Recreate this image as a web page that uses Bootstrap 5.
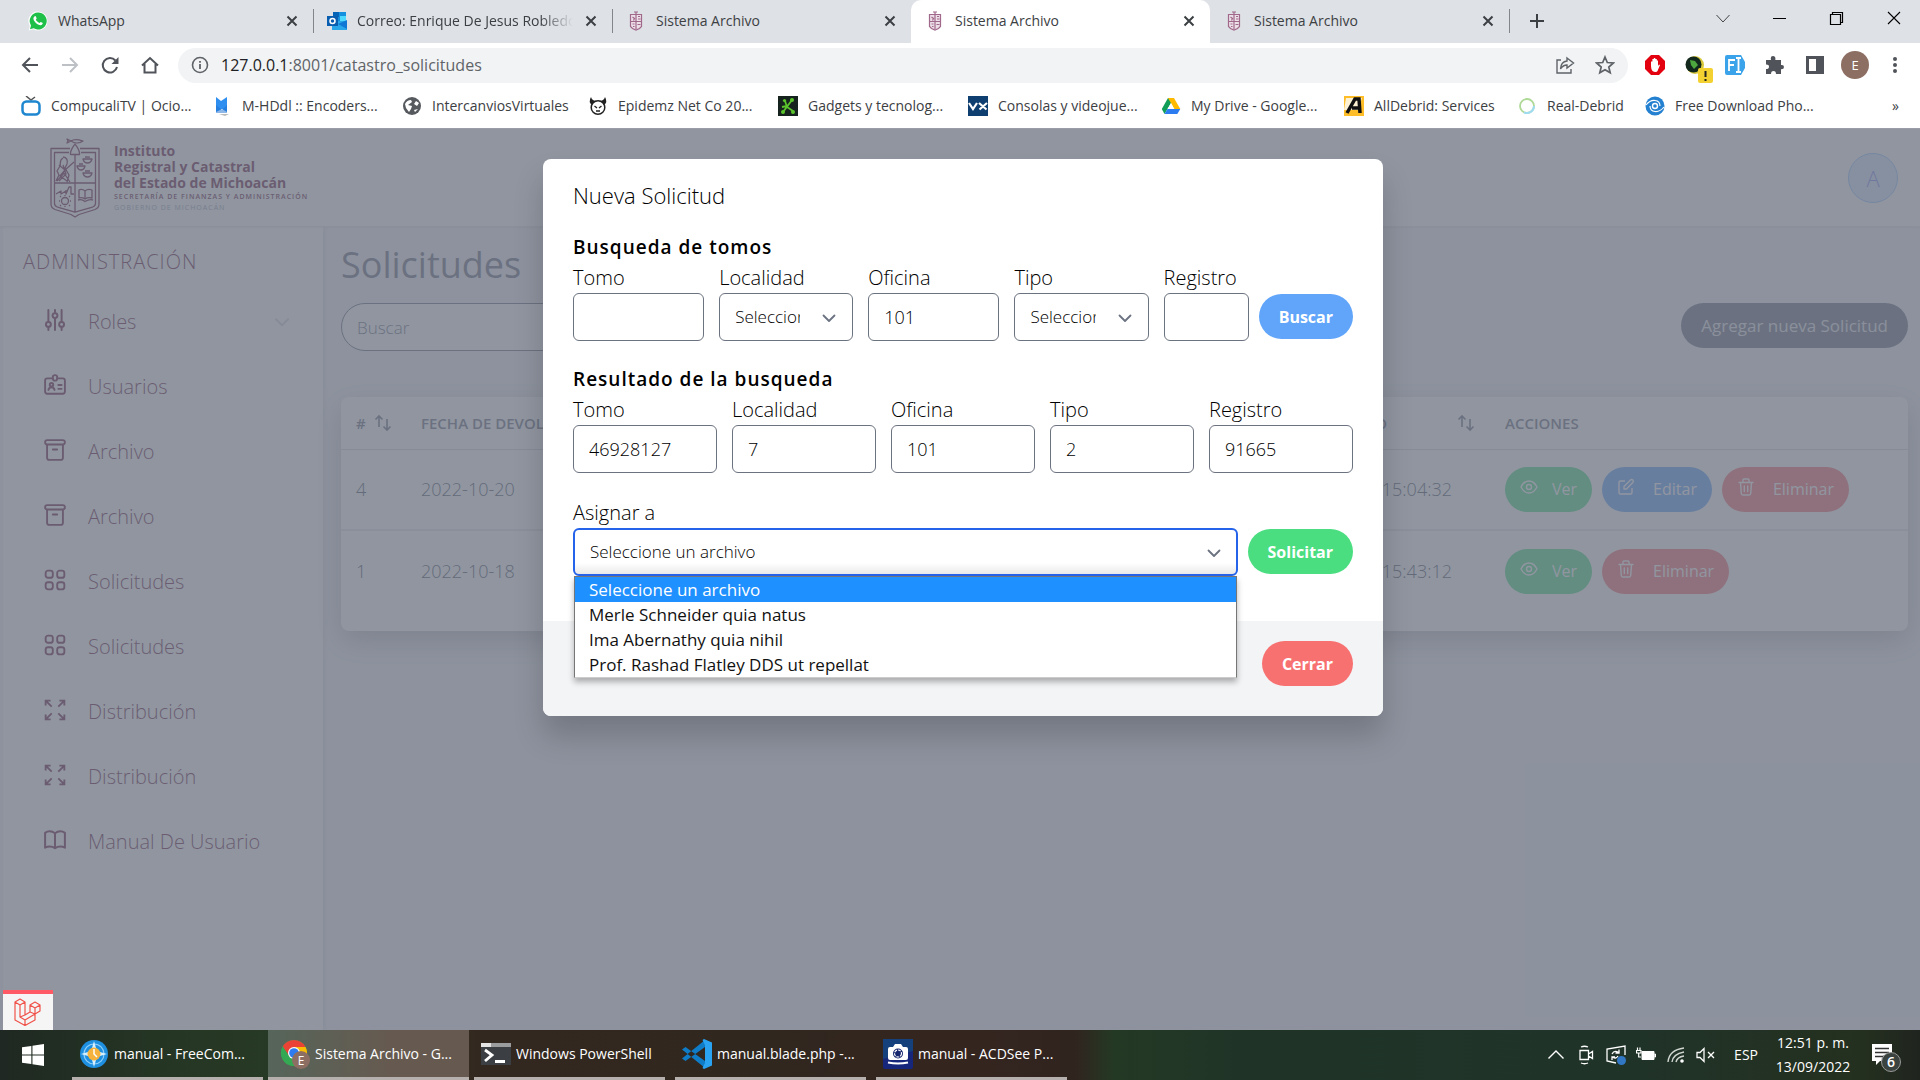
<!DOCTYPE html>
<html lang="es">
<head>
<meta charset="utf-8">
<meta name="viewport" content="width=device-width, initial-scale=1">
<title>Sistema Archivo</title>
<link href="https://cdn.jsdelivr.net/npm/bootstrap@5.3.0/dist/css/bootstrap.min.css" rel="stylesheet">
<style>
  :root { --wine: #6b1d45; --slate: #6b7280; }
  body { font-family: "Open Sans", "Noto Sans", sans-serif; font-size: 14px; line-height: 20px; color: #3c4043; background: #fff; }
  svg { flex: none; display: block; }
  button { font-family: inherit; }
  .flat { border: 0; background: none; padding: 0; color: inherit; display: block; }

  /* browser window */
  .tabstrip { background: #dee1e6; height: 43px; padding-left: 14px; }
  .tab-item { width: 299px; height: 42px; padding: 0 13px 0 14px; gap: 10px; position: relative; }
  .tab-item + .tab-item::before { content: ""; position: absolute; left: 0; top: 9px; height: 24px; border-left: 1px solid #80868b; }
  .tab-item.on { background: #fff; height: 43px; border-radius: 10px 10px 0 0; padding-bottom: 1px; }
  .tab-item.on::before, .tab-item.on + .tab-item::before { display: none; }
  .tab-item > span { flex: 1; white-space: nowrap; overflow: hidden; }
  .fade-end { -webkit-mask-image: linear-gradient(90deg, #000 85%, transparent); mask-image: linear-gradient(90deg, #000 85%, transparent); }
  .win-ctl { gap: 37px; padding-right: 16px; height: 38px; }
  .toolbar-row { height: 44px; padding: 0 15px 0 20px; gap: 20px; color: #5f6368; }
  .omni { background: #f1f3f4; height: 35px; border-radius: 18px; padding: 0 13px; gap: 12px; margin: 0 -3px 0 -2px; }
  .omni-url { font-size: 16px; color: #5f6368; }
  .omni-url b { font-weight: 400; color: #202124; }
  .exts { gap: 20px; }
  .exts > svg { width: 20px; height: 20px; overflow: visible; }
  .face { width: 28px; height: 28px; margin: 0 -4px; border-radius: 50%; background: #8d6e63; color: #fff; font-size: 13px; }
  .marks { height: 42px; padding: 0 21px 4px; border-bottom: 1px solid #9a9ca8; }
  .marks-grid { display: grid; grid-template-columns: 191px 190px 186px 190px 190px 193px 183px 173px 128px 180px; }
  .marks a { color: #3c4043; text-decoration: none; gap: 10px; white-space: nowrap; font-size: 14px; }

  /* application */
  .stage { font-size: 18px; background: #f3f4f6; overflow: hidden; font-weight: 300; }
  .veil { position: absolute; inset: 0; background: rgba(107,114,128,.75); }
  .app-head { background: #fff; height: 98px; padding: 0 22px 0 50px; border-bottom: 1px solid #e5e7eb; box-shadow: 0 1px 2px rgba(0,0,0,.08); position: relative; }
  .brand { color: var(--wine); text-decoration: none; gap: 14px; }
  .brand-name { font-weight: 700; font-size: 14px; line-height: 16px; }
  .brand-sub { font-weight: 600; font-size: 7px; line-height: 12px; letter-spacing: 1px; }
  .brand-gov { font-weight: 400; font-size: 7px; line-height: 10px; letter-spacing: 1px; color: #9ca3af; }
  .user-dot { width: 50px; height: 50px; border-radius: 50%; border: 1px solid #93c5fd; background: #dbeafe; color: #818cf8; font-size: 22px; }
  .side { width: 320px; margin-left: 3px; background: #fff; color: var(--wine); box-shadow: 2px 0 4px rgba(0,0,0,.08); }
  .side h2 { font-size: 20px; line-height: 30px; font-weight: 300; letter-spacing: 1px; margin: 20px 0 12px 20px; }
  .side a { color: inherit; text-decoration: none; height: 65px; padding: 0 30px 0 40px; gap: 21px; font-size: 20px; }
  .side a span { flex: 1; }
  .side a > svg:first-child { margin-bottom: 3px; }
  .work { padding: 18px 12px 0 18px; min-width: 0; }
  .work h1 { font-size: 36px; line-height: 40px; font-weight: 400; color: var(--slate); margin: 0 0 18px; }
  .find { width: 560px; height: 48px; border: 1px solid var(--slate); border-radius: 24px; padding: 0 15px; font-size: 17px; font-weight: 300; background: #fff; }
  .find::placeholder { color: var(--slate); opacity: 1; }
  .pill { height: 45px; border: 0; border-radius: 23px; padding: 0 20px; color: #fff; font-size: 17px; line-height: 24px; white-space: nowrap; }
  .pill-dark { background: var(--slate); color: #e5e7eb; }
  .c-green { background: #4ade80; } .c-blue { background: #60a5fa; } .c-red { background: #f87171; }
  .act-row { gap: 10px; }
  .act { padding: 0 15px; gap: 18px; display: flex; align-items: center; font-size: 16px; font-weight: 400; }
  .act.c-green { gap: 14px; }
  .act svg { margin-bottom: 4px; }
  .listing { background: #fff; border-radius: 8px; padding-bottom: 20px; margin-top: 46px; box-shadow: 0 10px 28px rgba(0,0,0,.25); }
  .listing table { width: 100%; table-layout: fixed; color: #4b5563; font-size: 18px; }
  .listing th { height: 52px; font-size: 15px; font-weight: 600; color: var(--slate); padding: 0 15px; border-bottom: 1px solid #d1d5db; white-space: nowrap; }
  .listing td { height: 81px; padding: 0 15px; border-bottom: 2px solid #e5e7eb; }
  .listing tr:last-child td { border-bottom: 0; }
  .w-num { width: 65px; } .w-when { width: 300px; } .w-act { width: 418px; }
  .th-gap { gap: 70px; }
  .listing td.when { text-align: right; padding-right: 38px; }

  /* dialog */
  .dialog-wrap { position: absolute; inset: 30px 0 auto 6px; }
  .dialog { width: 840px; background: #fff; border-radius: 8px; color: #000; box-shadow: 0 20px 30px rgba(0,0,0,.18); }
  .dialog-main { padding: 18px 30px 45px; }
  .dialog h3 { font-size: 22px; line-height: 36px; font-weight: 300; margin: 0 0 19px; }
  .dialog h4 { font-size: 19px; line-height: 30px; font-weight: 600; letter-spacing: 1px; margin: 0; }
  .dialog label { font-size: 20px; line-height: 31px; display: block; }
  .dialog .form-control, .dialog .form-select { height: 48px; border: 1px solid var(--slate); border-radius: 6px; padding: 0 15px; font-size: 18px; font-weight: 300; color: #000; }
  .dialog .form-select { padding-right: 52px; font-size: 17px; text-overflow: clip; background-image: none; }
  .pick { position: relative; }
  .pick > svg { position: absolute; right: 14px; top: 15px; pointer-events: none; }
  .first-row { display: grid; grid-template-columns: 131fr 134fr 131fr 134fr 85fr; column-gap: 15px; }
  .group-a { margin-bottom: 23px; gap: 10px; } .group-b { margin-bottom: 24px; }
  .group-c { gap: 10px; }
  .second-row { display: grid; grid-template-columns: repeat(5, 1fr); column-gap: 15px; }
  .pill-bold { font-size: 16px; font-weight: 700; margin-bottom: 2px; }
  .dialog .form-select.open { border: 2px solid #2563eb; background: linear-gradient(#fff 75%, #e9e9e9); }
  .choices { position: absolute; left: 1px; right: 1px; top: 100%; margin: 0; padding: 0; list-style: none; background: #fff; border: 1px solid #767676; border-bottom-color: #ccc; box-shadow: 0 4px 6px rgba(0,0,0,.3); z-index: 3; }
  .choices li { height: 25px; line-height: 25px; padding: 0 14px; font-size: 17px; font-weight: 400; color: #111; }
  .choices li.hot { background: #1e90ff; color: #fff; }
  .dialog-foot { background: #f3f4f6; border-radius: 0 0 8px 8px; padding: 20px 30px 30px; }
  .dialog-foot .pill-bold { margin: 0; }
  .dbg { position: absolute; left: 3px; bottom: 0; width: 50px; height: 40px; background: #f5f5f5; border: 0; border-top: 4px solid #ff5a65; padding: 0; }

  /* task bar */
  .taskbar { height: 50px; color: #fff; background: linear-gradient(90deg, #1f2822 0, #253524 8%, #273a25 14%, #33281f 25%, #30271f 40%, #35251f 50%, #30241f 56%, #243924 58%, #1f3427 65%, #203329 85%, #24301f 97%, #20241f 100%); }
  .start { width: 67px; padding-left: 22px; }
  .task-app { width: 201px; padding: 0 5px; color: #fff; font-size: 14px; }
  .task-app > span { height: 50px; border-bottom: 3px solid #b5b0ad; padding: 0 0 0 7px; gap: 5px; white-space: nowrap; }
  .task-app > span > svg { width: 30px; height: 30px; }
  .task-app.on { padding: 0; background: linear-gradient(90deg, #56655a, #665a50 60%, #665a50); }
  .task-app.on > span { padding-left: 12px; }
  .tray { gap: 10px; padding-right: 18px; }
  .clock { font-size: 14px; line-height: 24px; width: 90px; }
</style>
<script src="https://cdn.jsdelivr.net/npm/bootstrap@5.3.0/dist/js/bootstrap.bundle.min.js"></script>
</head>
<body class="d-flex flex-column min-vh-100">

<svg width="0" height="0" class="position-absolute" aria-hidden="true">
  <defs>
    <symbol id="i-x" viewBox="0 0 16 16"><path d="M3.500 3.500l9 9m0-9l-9 9" stroke="currentColor" stroke-width="2" fill="none"/></symbol>
    <symbol id="i-down" viewBox="0 0 20 20"><path d="M4.500 7.500l5.500 5.500 5.500-5.500" stroke="currentColor" stroke-width="1.800" fill="none" stroke-linecap="round" stroke-linejoin="round"/></symbol>
    <symbol id="i-sort" viewBox="0 0 18 18"><path d="M5 13V2M1.500 5.500L5 2l3.500 3.500M13 5v11M9.500 12.500L13 16l3.500-3.500" stroke="currentColor" stroke-width="1.600" fill="none"/></symbol>
    <symbol id="i-crest" viewBox="0 0 50 80"><g fill="none" stroke="currentColor" stroke-width="1.300" stroke-linejoin="round">
      <path d="M20 10.500H1v55.500q0 4 4 5.500l16 5 4 2.500 4-2.500 16-5q4-1.500 4-5.500V10.500H30"/><path d="M19 14.500H4.500v51q0 2.500 3 3.500L25 74l17.500-5q3-1 3-3.500v-51H31M25 17v57M4.500 45h41"/>
      <path d="M25 6c-2 3-5 6-4.500 10.500h9C30 12 27 9 25 6zM17 1l4 2c4-3 9-1 12 0-3 2-8 3-12 0l-4 2 1-2z"/>
      <path d="M33 21h9q-1 4-4.500 4T33 21zM27 28h8q-1 4-4 4t-4-4zM33 35h9q-1 4-4.500 4T33 35zM35 19l5 .1M29 26h4M35 33h5"/>
      <path d="M13 19c4 0 5 4 4 7l-2 4 4 7-2 7M13 20c-4 2-2 5-3 8l-3 5 2 4-3 6M9 27l6 5-5 6 7 5M15 32l9-8M7 43l7-8 6 9M13 27l3 9-7 7"/>
      <path d="M6 56l5-3v3l5-3v3l3-7h2v7h3M16 55v-3"/><circle cx="15" cy="63" r="3.500"/><path d="M15 58v-1M15 69v-1M10 63H9M21 63h-1M11 59l-1-1M19 59l1-1M11 67l-1 1M19 67l1 1"/>
      <path d="M29 52q3-1.500 6 1 3-2.500 7-1v8q-4-1-7 1-3-2-6-1zM35 53v8M28 62q4-1 7 1.500 4-2.500 8-1.500"/></g></symbol>
    <symbol id="i-mini" viewBox="0 0 20 20"><g fill="none" stroke="#a0688a"><path d="M4.500 3.500h11v12l-2 2-3.500 1.500L6.500 17.500l-2-2z" fill="#ecdfe7" stroke-width="1.200"/><path d="M8 1h4M10 1v17M5 10.500h10M6.500 6l2 1.500-1 2M12 5.500h2M12 8h2.500M6.500 13h2M7 15.500h1.500M11.500 13.500h3" stroke-width="1.200"/></g></symbol>
    <symbol id="i-roles" viewBox="0 0 20 20"><g fill="none" stroke="currentColor" stroke-width="1.800" stroke-linecap="round"><path d="M4 1v10M4 17v2M10 1v2M10 8.500V19M16 1v10M16 17v2"/><circle cx="4" cy="14" r="2.200"/><circle cx="10" cy="6" r="2.200"/><circle cx="16" cy="14" r="2.200"/></g></symbol>
    <symbol id="i-users" viewBox="0 0 20 20"><g fill="none" stroke="currentColor" stroke-width="1.700" stroke-linecap="round"><path d="M8 4H3q-2 0-2 2v10q0 2 2 2h14q2 0 2-2V6q0-2-2-2h-5"/><rect x="8" y="1" width="4" height="5" rx="2"/><circle cx="6.800" cy="9.800" r="1.600"/><path d="M4 14.500q.5-2.500 2.800-2.500t2.800 2.500M13 10h3M13 13.500h3"/></g></symbol>
    <symbol id="i-box" viewBox="0 0 20 20"><g fill="none" stroke="currentColor" stroke-width="1.700" stroke-linecap="round"><rect x="1" y="1" width="18" height="4" rx="2"/><path d="M2.800 5.500V17q0 2 2 2h10.400q2 0 2-2V5.500M8 9.500h4"/></g></symbol>
    <symbol id="i-grid" viewBox="0 0 20 20"><g fill="none" stroke="currentColor" stroke-width="1.700"><rect x="1.500" y="1.500" width="6.500" height="6.500" rx="2.200"/><rect x="12" y="1.500" width="6.500" height="6.500" rx="2.200"/><rect x="1.500" y="12" width="6.500" height="6.500" rx="2.200"/><rect x="12" y="12" width="6.500" height="6.500" rx="2.200"/></g></symbol>
    <symbol id="i-spread" viewBox="0 0 20 20"><path d="M7 7L1.500 1.500M1.500 6V1.500H6M13 7l5.500-5.500M14 1.500h4.500V6M7 13l-5.500 5.500M1.500 14v4.500H6M13 13l5.500 5.500M18.500 14v4.500H14" fill="none" stroke="currentColor" stroke-width="1.700"/></symbol>
    <symbol id="i-book" viewBox="0 0 20 20"><path d="M10 4Q8 2 5 2 3 2 1 3.500V17q2-1 4-1 3 0 5 1.500 2-1.500 5-1.500 2 0 4 1V3.500Q17 2 15 2q-3 0-5 2v13.500" fill="none" stroke="currentColor" stroke-width="1.800" stroke-linejoin="round"/></symbol>
    <symbol id="i-eye" viewBox="0 0 18 18"><g fill="none" stroke="currentColor" stroke-width="1.400"><path d="M1 9q3-6 8-6t8 6q-3 6-8 6T1 9z"/><circle cx="9" cy="9" r="2.500"/></g></symbol>
    <symbol id="i-pen" viewBox="0 0 18 18"><path d="M8 3H3.500Q2 3 2 4.500v10Q2 16 3.500 16h10q1.500 0 1.500-1.500V10M7 11V8.500l6.500-6.500q1.200-1 2.300 0 1.200 1.200 0 2.400L9.500 11z" fill="none" stroke="currentColor" stroke-width="1.400" stroke-linejoin="round"/></symbol>
    <symbol id="i-bin" viewBox="0 0 18 18"><path d="M2 4.500h14M6 4.500V2q0-1 1-1h4q1 0 1 1v2.500M3.500 4.500l.8 11q.1 1.500 1.500 1.500h6.400q1.400 0 1.500-1.500l.8-11M7.300 8v5.500M10.700 8v5.500" fill="none" stroke="currentColor" stroke-width="1.400" stroke-linecap="round"/></symbol>
  </defs>
</svg>

<header>
  <div class="tabstrip d-flex justify-content-between">
    <div class="d-flex align-items-start">
      <div class="tab-item d-flex align-items-center">
        <svg width="20" height="20" viewBox="0 0 20 20"><path d="M10 .5a9.500 9.500 0 0 1 0 19q-2.500 0-4.500-1.200L.8 19.500l1-4.600A9.500 9.500 0 0 1 10 .5z" fill="#fff"/><path d="M10 1.500a8.500 8.500 0 1 1-4.300 15.700L2 18.200l1-3.700A8.500 8.500 0 0 1 10 1.500z" fill="#1fc04a"/><path d="M6.500 5.500c.6-.6 1.200-.5 1.500.3l.6 1.400c.2.500-.5 1-.8 1.400.8 1.700 1.900 2.700 3.600 3.400.5-.3.900-1.200 1.400-1.100l1.600.8c1 .5-.2 2.300-1.400 2.500C9.700 14.600 5.200 10 5.400 7.300c.1-.8.600-1.400 1.100-1.800z" fill="#fff"/></svg>
        <span>WhatsApp</span><button class="flat" aria-label="Cerrar pestaña"><svg width="16" height="16"><use href="#i-x"/></svg></button>
      </div>
      <div class="tab-item d-flex align-items-center">
        <svg width="20" height="20" viewBox="0 0 20 20"><path d="M6 1h13v9H6z" fill="#1490df"/><path d="M6 1h6v5H6z" fill="#0364b8"/><path d="M13 5h6v5h-6z" fill="#50d9ff"/><path d="M5 10h15v9H5z" fill="#28a8ea"/><path d="M20 9v9l-9-5z" fill="#0f78d4"/><path d="M0 5h11v10H0z" fill="#0a5eb0"/><circle cx="5.500" cy="10" r="2.500" fill="none" stroke="#fff" stroke-width="1.500"/></svg>
        <span class="fade-end">Correo: Enrique De Jesus Robledo</span><button class="flat" aria-label="Cerrar pestaña"><svg width="16" height="16"><use href="#i-x"/></svg></button>
      </div>
      <div class="tab-item d-flex align-items-center">
        <svg width="20" height="20"><use href="#i-mini"/></svg>
        <span>Sistema Archivo</span><button class="flat" aria-label="Cerrar pestaña"><svg width="16" height="16"><use href="#i-x"/></svg></button>
      </div>
      <div class="tab-item on d-flex align-items-center">
        <svg width="20" height="20"><use href="#i-mini"/></svg>
        <span>Sistema Archivo</span><button class="flat" aria-label="Cerrar pestaña"><svg width="16" height="16"><use href="#i-x"/></svg></button>
      </div>
      <div class="tab-item d-flex align-items-center">
        <svg width="20" height="20"><use href="#i-mini"/></svg>
        <span>Sistema Archivo</span><button class="flat" aria-label="Cerrar pestaña"><svg width="16" height="16"><use href="#i-x"/></svg></button>
      </div>
      <div class="tab-item w-auto d-flex align-items-center ps-3">
        <button class="flat ms-1" aria-label="Nueva pestaña"><svg width="16" height="16" viewBox="0 0 16 16"><path d="M8 1v14M1 8h14" stroke="#3c4043" stroke-width="2"/></svg></button>
      </div>
    </div>
    <div class="win-ctl d-flex align-items-center text-black">
      <button class="flat" aria-label="Buscar pestañas"><svg width="20" height="20" viewBox="0 0 20 20"><path d="M3.500 6L10 13l6.500-7" fill="none" stroke="#444" stroke-width="1"/></svg></button>
      <button class="flat" aria-label="Minimizar"><svg width="20" height="20" viewBox="0 0 20 20"><path d="M3 9.500h13" stroke="#000" stroke-width="1"/></svg></button>
      <button class="flat" aria-label="Restaurar"><svg width="20" height="20" viewBox="0 0 20 20"><path d="M3.500 5.500h10v10h-10zM5.500 5.500v-2h10v10h-2" fill="none" stroke="#000" stroke-width="1.200"/></svg></button>
      <button class="flat" aria-label="Cerrar ventana"><svg width="20" height="20" viewBox="0 0 20 20"><path d="M4 3l12 12M16 3L4 15" stroke="#000" stroke-width="1.100"/></svg></button>
    </div>
  </div>

  <div class="toolbar-row d-flex align-items-center">
    <button class="flat" aria-label="Atrás"><svg width="20" height="20" viewBox="0 0 20 20"><path d="M18 10H3M10 3l-7 7 7 7" fill="none" stroke="#50545a" stroke-width="2"/></svg></button>
    <button class="flat" aria-label="Adelante"><svg width="20" height="20" viewBox="0 0 20 20"><path d="M2 10h15M10 3l7 7-7 7" fill="none" stroke="#bdc1c6" stroke-width="2"/></svg></button>
    <button class="flat" aria-label="Recargar"><svg width="20" height="20" viewBox="0 0 20 20"><path d="M17 12a7.200 7.200 0 1 1-1.600-6.500" fill="none" stroke="#50545a" stroke-width="2"/><path d="M18.500 2v7h-7z" fill="#50545a"/></svg></button>
    <button class="flat" aria-label="Inicio"><svg width="20" height="20" viewBox="0 0 20 20"><path d="M2 10.500L10 3l8 7.500M4.500 9v8.500h11V9" fill="none" stroke="#50545a" stroke-width="2"/></svg></button>
    <div class="omni d-flex align-items-center flex-grow-1">
      <svg width="18" height="18" viewBox="0 0 18 18"><circle cx="9" cy="9" r="7.500" fill="none" stroke="#5f6368" stroke-width="1.600"/><path d="M9 8v5M9 5v1.700" stroke="#5f6368" stroke-width="1.800"/></svg>
      <a href="#" class="omni-url text-decoration-none flex-grow-1"><b>127.0.0.1</b>:8001/catastro_solicitudes</a>
      <svg width="20" height="20" viewBox="0 0 20 20"><path d="M6 5H2v13h14v-4M12 3l6.500 5L12 13v-3q-4 0-6.500 4Q6 6.500 12 6z" fill="none" stroke="#5f6368" stroke-width="1.400"/></svg>
      <svg class="ms-2" width="20" height="20" viewBox="0 0 20 20"><path d="M10 2l2.300 5.500 6 .5-4.500 4 1.400 5.800L10 14.700l-5.200 3.100L6.200 12 1.700 8l6-.5z" fill="none" stroke="#5f6368" stroke-width="1.700"/></svg>
    </div>
    <div class="exts d-flex align-items-center">
      <svg viewBox="1 1 20 20"><path d="M7 1h8l6 6v8l-6 6H7l-6-6V7z" fill="#e3000f"/><path d="M7 12V7.500h1.400V5h1.400V4h1.500v1h1.500v1.500H14V12l1-1.500 1 .5-2.500 6q-.5 1-2 1t-3-1Q7 15.500 7 12z" fill="#fff"/></svg>
      <svg viewBox="0 0 20 20"><circle cx="10" cy="10" r="9" fill="#d8c83c"/><circle cx="8.500" cy="9.500" r="8" fill="#12281c"/><path d="M5 5l5 1 3 4-4 4-3-4zM3 11l3 3" fill="#4da63e"/><rect x="13" y="13" width="15" height="15" rx="2" fill="#f3d131"/><path d="M20.500 16v6M20.500 24v2" stroke="#222" stroke-width="2"/></svg>
      <svg viewBox="1 1 20 20"><path d="M3 1h14l4 7v6l-4 7H3q-2 0-2-2V3q0-2 2-2z" fill="#3ba3ea"/><path d="M5 17V6h6M5 11h5M12 4h5M12 18h5M14.500 4v14" fill="none" stroke="#fff" stroke-width="1.800"/></svg>
      <svg viewBox="1 1 20 20"><path d="M2 6h5q-1-4 2-4t2.300 4H17v5q3-.5 3 2t-3 2.300V20h-5q0-3-2.500-3T7 20H2v-5q3 0 3-2.300T2 10.500z" fill="#50545a"/></svg>
      <svg viewBox="0 0 20 20"><path d="M1 1h18v18H1zM4 4v12h7V4z" fill="#50545a" fill-rule="evenodd"/></svg>
      <button class="flat face d-flex align-items-center justify-content-center" aria-label="Perfil E">E</button>
      <svg viewBox="0 0 20 20"><g fill="#50545a"><circle cx="10" cy="4" r="2"/><circle cx="10" cy="10" r="2"/><circle cx="10" cy="16" r="2"/></g></svg>
    </div>
  </div>

  <nav class="marks d-flex align-items-center justify-content-between" aria-label="Marcadores">
    <div class="marks-grid">
      <a href="#" class="d-flex align-items-center"><svg width="20" height="20" viewBox="0 0 20 20"><path d="M5 0l5 4 4-3" stroke="#555" stroke-width="1.500" fill="none"/><rect x="1.500" y="5.500" width="17" height="13" rx="4" fill="#fff" stroke="#1e87cf" stroke-width="2.500"/></svg>CompucaliTV | Ocio...</a>
      <a href="#" class="d-flex align-items-center"><svg width="20" height="20" viewBox="0 0 20 20"><path d="M4 1l5 4 6-4v15l-5-3-6 3z" fill="#2f8ff0"/><path d="M4 9l6 5 5-5v8H4z" fill="#1c6fd0" opacity=".5"/><path d="M7 18h10l-4 2z" fill="#bbb"/></svg>M-HDdl :: Encoders...</a>
      <a href="#" class="d-flex align-items-center"><svg width="20" height="20" viewBox="0 0 20 20"><circle cx="10" cy="10" r="9" fill="#565a5f"/><path d="M3 8q2-4 6-4l1 2-4 3 4 1-1 3-2 3-3-4zM14 5l3 2-2 3-3-2zM12 14l4-1-3 3z" fill="#fff"/></svg>IntercanviosVirtuales</a>
      <a href="#" class="d-flex align-items-center"><svg width="20" height="20" viewBox="0 0 20 20"><circle cx="10" cy="11.500" r="6.800" fill="#fff" stroke="#222" stroke-width="1.500"/><path d="M3 1q-3 5 1 8 1-3 5-4Q4 5 3 1zM17 1q3 5-1 8-1-3-5-4 5 0 6-4z" fill="#222"/><path d="M6.500 10l2.500 2M13.500 10L11 12M8 15h4" stroke="#222" stroke-width="1.300"/></svg>Epidemz Net Co 20...</a>
      <a href="#" class="d-flex align-items-center"><svg width="20" height="20" viewBox="0 0 20 20"><path d="M0 0h20v20H0z" fill="#16221d"/><path d="M5 16l9-12M7 5l2 6 6 4M9 10l-5 1" stroke="#5bc42c" stroke-width="1.800" fill="none"/><g fill="#5bc42c"><circle cx="14" cy="4" r="2"/><circle cx="6.500" cy="4.500" r="1.600"/><circle cx="5" cy="16" r="2"/><circle cx="15" cy="16" r="2"/></g></svg>Gadgets y tecnolog...</a>
      <a href="#" class="d-flex align-items-center"><svg width="20" height="20" viewBox="0 0 20 20"><path d="M0 0h20v20H0z" fill="#0e3f70"/><path d="M1 7l4 6 4-6M11 7l7.500 6.500M19 7l-7.500 6.500" stroke="#fff" stroke-width="2.200" fill="none"/></svg>Consolas y videojue...</a>
      <a href="#" class="d-flex align-items-center"><svg width="20" height="20" viewBox="0 0 20 20"><path d="M7 2h6l-6.500 11-3 5L.8 13z" fill="#0f9d58"/><path d="M7 2h6l6.300 11h-6z" fill="#ffba00"/><path d="M6.500 13h12.800l-3 5H3.500z" fill="#2a7cf0"/><path d="M10 7l3.300 6H6.500z" fill="#fff"/></svg>My Drive - Google...</a>
      <a href="#" class="d-flex align-items-center"><svg width="20" height="20" viewBox="0 0 20 20"><path d="M0 0h20v20H0z" fill="#ffbd28"/><path d="M2 2h16l-4 12H0z" fill="#fff" opacity=".8"/><path d="M3 17L11 3h4l1 14M8 12h7" stroke="#111" stroke-width="3.500" fill="none"/></svg>AllDebrid: Services</a>
      <a href="#" class="d-flex align-items-center"><svg width="20" height="20" viewBox="0 0 20 20"><circle cx="10" cy="10" r="7" fill="none" stroke="#aed997" stroke-width="1.800"/><path d="M17 10a7 7 0 0 1-10 6.300" fill="none" stroke="#9fdcf2" stroke-width="2"/></svg>Real-Debrid</a>
      <a href="#" class="d-flex align-items-center"><svg width="20" height="20" viewBox="0 0 20 20"><circle cx="10" cy="10" r="9.500" fill="#2480d0"/><path d="M1 9q4-5 9-4.500 5 .5 5 5.500M19 11q-4 5-9 4.500-5-.5-5-5.500" stroke="#fff" stroke-width="1.200" fill="none"/><circle cx="10" cy="10" r="2.500" fill="none" stroke="#fff" stroke-width="1.400"/></svg>Free Download Pho...</a>
    </div>
    <span>»</span>
  </nav>
</header>

<main class="stage flex-grow-1 position-relative d-flex flex-column">
  <div class="app-head d-flex align-items-center justify-content-between">
    <a href="#" class="brand d-flex align-items-center">
      <svg width="50" height="80"><use href="#i-crest"/></svg>
      <span class="d-block">
        <span class="brand-name d-block">Instituto<br>Registral y Catastral<br>del Estado de Michoacán</span>
        <span class="brand-sub d-block text-nowrap">SECRETARÍA DE FINANZAS Y ADMINISTRACIÓN</span>
        <span class="brand-gov d-block">GOBIERNO DE MICHOACÁN</span>
      </span>
    </a>
    <button class="user-dot p-0 fw-light">A</button>
  </div>

  <div class="d-flex flex-grow-1">
    <nav class="side flex-shrink-0" aria-label="Administración">
      <h2>ADMINISTRACIÓN</h2>
      <a href="#" class="d-flex align-items-center"><svg width="24" height="22"><use href="#i-roles"/></svg><span>Roles</span><svg width="22" height="22" color="#d8d5dd"><use href="#i-down"/></svg></a>
      <a href="#" class="d-flex align-items-center"><svg width="24" height="22"><use href="#i-users"/></svg><span>Usuarios</span></a>
      <a href="#" class="d-flex align-items-center"><svg width="24" height="22"><use href="#i-box"/></svg><span>Archivo</span></a>
      <a href="#" class="d-flex align-items-center"><svg width="24" height="22"><use href="#i-box"/></svg><span>Archivo</span></a>
      <a href="#" class="d-flex align-items-center"><svg width="24" height="22"><use href="#i-grid"/></svg><span>Solicitudes</span></a>
      <a href="#" class="d-flex align-items-center"><svg width="24" height="22"><use href="#i-grid"/></svg><span>Solicitudes</span></a>
      <a href="#" class="d-flex align-items-center"><svg width="24" height="22"><use href="#i-spread"/></svg><span>Distribución</span></a>
      <a href="#" class="d-flex align-items-center"><svg width="24" height="22"><use href="#i-spread"/></svg><span>Distribución</span></a>
      <a href="#" class="d-flex align-items-center"><svg width="24" height="22"><use href="#i-book"/></svg><span>Manual De Usuario</span></a>
    </nav>

    <section class="work flex-grow-1">
      <h1>Solicitudes</h1>
      <div class="d-flex justify-content-between align-items-start">
        <input class="find" type="search" placeholder="Buscar" aria-label="Buscar">
        <button class="pill pill-dark">Agregar nueva Solicitud</button>
      </div>
      <div class="listing">
        <table>
          <colgroup><col class="w-num"><col><col class="w-when"><col class="w-act"></colgroup>
          <thead>
            <tr>
              <th><span class="d-flex align-items-center gap-2"><span>#</span><svg width="18" height="18"><use href="#i-sort"/></svg></span></th>
              <th>FECHA DE DEVOLUCIÓN</th>
              <th><span class="th-gap d-flex align-items-center justify-content-end"><span>REGISTRADO</span><svg width="18" height="18"><use href="#i-sort"/></svg></span></th>
              <th>ACCIONES</th>
            </tr>
          </thead>
          <tbody>
            <tr>
              <td>4</td><td>2022-10-20</td><td class="when">15:04:32</td>
              <td><div class="act-row d-flex">
                <button class="pill act c-green"><svg width="18" height="18"><use href="#i-eye"/></svg>Ver</button>
                <button class="pill act c-blue"><svg width="18" height="18"><use href="#i-pen"/></svg>Editar</button>
                <button class="pill act c-red"><svg width="18" height="18"><use href="#i-bin"/></svg>Eliminar</button>
              </div></td>
            </tr>
            <tr>
              <td>1</td><td>2022-10-18</td><td class="when">15:43:12</td>
              <td><div class="act-row d-flex">
                <button class="pill act c-green"><svg width="18" height="18"><use href="#i-eye"/></svg>Ver</button>
                <button class="pill act c-red"><svg width="18" height="18"><use href="#i-bin"/></svg>Eliminar</button>
              </div></td>
            </tr>
          </tbody>
        </table>
      </div>
    </section>
  </div>

  <div class="veil"></div>

  <div class="dialog-wrap d-flex justify-content-center">
    <div class="dialog" role="dialog" aria-labelledby="dlg-title">
      <div class="dialog-main">
        <h3 id="dlg-title">Nueva Solicitud</h3>
        <h4>Busqueda de tomos</h4>
        <div class="group-a d-flex align-items-end">
          <div class="first-row flex-grow-1">
            <div><label for="f-tomo">Tomo</label><input id="f-tomo" class="form-control"></div>
            <div><label for="f-loc">Localidad</label><div class="pick"><select id="f-loc" class="form-select"><option>Seleccione una localidad</option></select><svg width="20" height="20" color="#6b7280"><use href="#i-down"/></svg></div></div>
            <div><label for="f-ofi">Oficina</label><input id="f-ofi" class="form-control" value="101"></div>
            <div><label for="f-tipo">Tipo</label><div class="pick"><select id="f-tipo" class="form-select"><option>Seleccione un tipo</option></select><svg width="20" height="20" color="#6b7280"><use href="#i-down"/></svg></div></div>
            <div><label for="f-reg">Registro</label><input id="f-reg" class="form-control"></div>
          </div>
          <button class="pill pill-bold c-blue">Buscar</button>
        </div>
        <h4>Resultado de la busqueda</h4>
        <div class="group-b second-row">
          <div><label for="r-tomo">Tomo</label><input id="r-tomo" class="form-control" value="46928127"></div>
          <div><label for="r-loc">Localidad</label><input id="r-loc" class="form-control" value="7"></div>
          <div><label for="r-ofi">Oficina</label><input id="r-ofi" class="form-control" value="101"></div>
          <div><label for="r-tipo">Tipo</label><input id="r-tipo" class="form-control" value="2"></div>
          <div><label for="r-reg">Registro</label><input id="r-reg" class="form-control" value="91665"></div>
        </div>
        <label for="f-asig">Asignar a</label>
        <div class="group-c d-flex align-items-end">
          <div class="pick flex-grow-1">
            <select id="f-asig" class="form-select open"><option>Seleccione un archivo</option><option>Merle Schneider quia natus</option><option>Ima Abernathy quia nihil</option><option>Prof. Rashad Flatley DDS ut repellat</option></select>
            <svg width="20" height="20" color="#6b7280"><use href="#i-down"/></svg>
            <ul class="choices">
              <li class="hot">Seleccione un archivo</li>
              <li>Merle Schneider quia natus</li>
              <li>Ima Abernathy quia nihil</li>
              <li>Prof. Rashad Flatley DDS ut repellat</li>
            </ul>
          </div>
          <button class="pill pill-bold c-green">Solicitar</button>
        </div>
      </div>
      <div class="dialog-foot d-flex justify-content-end">
        <button class="pill pill-bold c-red">Cerrar</button>
      </div>
    </div>
  </div>

  <button class="dbg d-flex align-items-center justify-content-center" aria-label="Barra de depuración">
    <svg width="28" height="28" viewBox="0 0 28 28"><path d="M1 4l5-3 5 3v13l5-3V7l5-3 5 3v6l-5 3v6l-10 5.500L1 22zM1 4l5 3 5-3M6 7v12l5 3 10-6M6 19l5-2M11 22v5.500M16 7l5 3 5-3M21 10v6M16 14l5 2" fill="none" stroke="#f0524a" stroke-width="1.200" stroke-linejoin="round"/></svg>
  </button>
</main>

<footer class="taskbar d-flex justify-content-between">
  <div class="d-flex">
    <button class="flat start" aria-label="Inicio"><svg width="22" height="22" viewBox="0 0 20 20"><path d="M0 3l8.500-1.200v7.700H0zM9.500 1.600L20 0v9.500H9.500zM0 10.500h8.500v7.700L0 17zM9.500 10.500H20V20L9.500 18.400z" fill="#fff"/></svg></button>
    <button class="flat task-app"><span class="d-flex align-items-center">
      <svg viewBox="0 0 30 30"><circle cx="15" cy="15" r="14" fill="#1f8fe0"/><circle cx="15" cy="15" r="10" fill="none" stroke="#8fd0fa" stroke-width="1.200"/><path d="M15 2l2 7h-4zM15 28l2-7h-4zM2 15l7-2v4zM28 15l-7-2v4z" fill="#d6f0ff"/><circle cx="15" cy="15" r="6.500" fill="#f5b23c"/><path d="M15 10v5l3 3" stroke="#fff" stroke-width="1.500" fill="none"/></svg>manual - FreeCom...</span></button>
    <button class="flat task-app on"><span class="d-flex align-items-center">
      <svg viewBox="0 0 30 30"><circle cx="14" cy="14" r="13" fill="#34a853"/><path d="M14 14L2.700 7.500A13 13 0 0 1 25.300 7.500z" fill="#ea4335"/><path d="M14 8h11.600A13 13 0 0 1 14 27l6-10z" fill="#fbbc05"/><path d="M2.700 7.500L9 18l5-10z" fill="#ea4335"/><path d="M2.700 7.500A13 13 0 0 0 14 27l4-8-8-1z" fill="#34a853"/><circle cx="14" cy="14" r="6" fill="#fff"/><circle cx="14" cy="14" r="4.800" fill="#2f7cf0"/><circle cx="21" cy="21" r="9" fill="#8d6e63"/><text x="21" y="25.500" font-size="12" fill="#fff" text-anchor="middle">E</text></svg>Sistema Archivo - G...</span></button>
    <button class="flat task-app"><span class="d-flex align-items-center">
      <svg viewBox="0 0 30 30"><path d="M0 4h30v22H0z" fill="#3b3e42"/><path d="M0 4h30v4H0z" fill="#9a9c9e"/><path d="M0 4h10v4H0z" fill="#e4e4e4"/><path d="M4 11l7 5-7 6M14 22.500h10" stroke="#fff" stroke-width="2.800" fill="none"/></svg>Windows PowerShell</span></button>
    <button class="flat task-app"><span class="d-flex align-items-center">
      <svg viewBox="0 0 30 30"><path d="M0 10.500L3.500 8 23 22v7zM0 19.500L3.500 22 23 8V1z" fill="#0f7cc8"/><path d="M22 0l8 3.500v23L22 30l-1.500-1 2.500-5V6l-2.500-5z" fill="#2aa4f2"/></svg>manual.blade.php -...</span></button>
    <button class="flat task-app"><span class="d-flex align-items-center">
      <svg viewBox="0 0 30 30"><rect width="30" height="30" rx="2" fill="#16267a"/><path d="M0 0h30v12L0 20z" fill="#14407c"/><path d="M5 10q0-2 2-2h3l2-3h6l2 3h3q2 0 2 2v9q0 2-2 2H7q-2 0-2-2z" fill="#fff"/><circle cx="15" cy="14.500" r="5" fill="#15256e"/><circle cx="15" cy="14.500" r="3.500" fill="none" stroke="#fff" stroke-width="1.200" stroke-dasharray="3 1"/><path d="M5 23.500q10 2 20 0" stroke="#fff" stroke-width="2" fill="none"/></svg>manual - ACDSee P...</span></button>
  </div>
  <div class="tray d-flex align-items-center">
    <svg width="20" height="20" viewBox="0 0 20 20"><path d="M2.500 13.500L10 6l7.500 7.500" fill="none" stroke="#fff" stroke-width="1.400"/></svg>
    <svg width="20" height="20" viewBox="0 0 20 20"><path d="M4 5.500h8.500v9H4zM12.500 9l4-2.500v7l-4-2.500M5 2q3.500-1.500 7 0M5 18q3.500 1.500 7 0" fill="none" stroke="#fff" stroke-width="1.300"/></svg>
    <svg width="20" height="20" viewBox="0 0 20 20"><path d="M10 18L1 16V4l18-3v9M6 9q2-4 6-2l1 1M13 4.500V8h-3.500M12 11q-2 3.500-6 1M6 15v-3h3" fill="none" stroke="#fff" stroke-width="1.300"/><circle cx="15.500" cy="15.500" r="4.500" fill="#3177c4"/></svg>
    <svg width="20" height="20" viewBox="0 0 20 20"><path d="M6 6.500h12v8H6zM18.500 9h1v3h-1" fill="#fff" stroke="#fff"/><path d="M1.500 2.500v3M4 2.500v3M.5 5.500H5v2.500H.5zM2.700 8v4H5" stroke="#fff" stroke-width="1.200" fill="none"/></svg>
    <svg width="20" height="20" viewBox="0 0 18 20"><path d="M1 17Q2 5 17 3M5 17Q6 9 17 7M9 17q1-5 8-6" fill="none" stroke="#fff" stroke-width="1.400" opacity=".8"/><circle cx="15" cy="16" r="1.800" fill="#fff"/></svg>
    <svg width="20" height="20" viewBox="0 0 20 20"><path d="M1 7.500h3l4-4v13l-4-4H1zM12 7l6 6M18 7l-6 6" fill="none" stroke="#fff" stroke-width="1.300"/></svg>
    <span class="ms-2">ESP</span>
    <div class="clock text-center">12:51 p. m.<br>13/09/2022</div>
    <svg width="34" height="34" viewBox="0 0 34 34"><path d="M4 6h20v17H12l-4 4v-4H4z" fill="#fff"/><path d="M7 10.500h14M7 14.500h14M7 18.500h9" stroke="#333" stroke-width="1.300"/><circle cx="23" cy="24" r="9.500" fill="#3b4340" stroke="#999" stroke-width="1"/><text x="23" y="29" font-size="14" font-weight="600" fill="#fff" text-anchor="middle">6</text></svg>
  </div>
</footer>
</body>
</html>
